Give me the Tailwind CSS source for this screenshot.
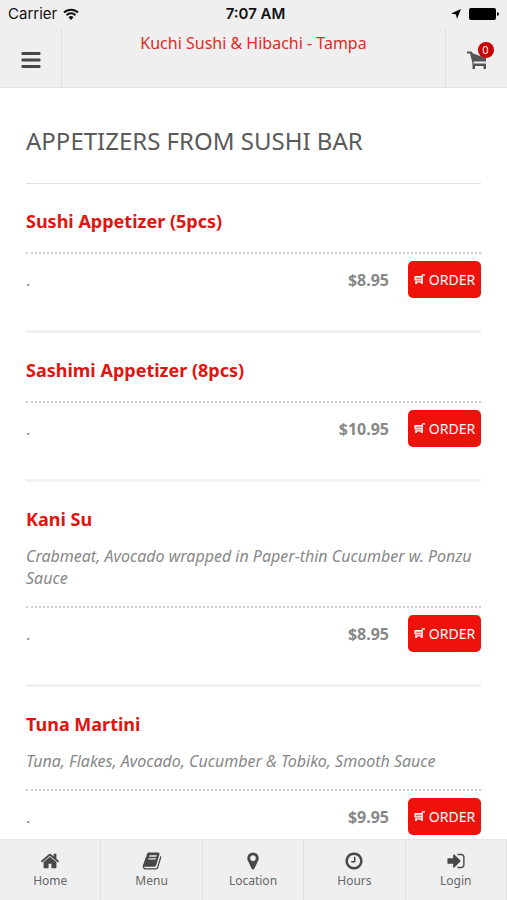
<!DOCTYPE html>
<html lang="en">
  <head>
    <title>Kuchi Sushi &amp; Hibachi - Tampa</title>
    <meta charset="utf-8">
    <meta name="viewport" content="width=device-width, initial-scale=1.0">
    <script src="https://cdn.jsdelivr.net/npm/@tailwindcss/browser@4"></script>
  </head>
  <body class="bg-white font-['Noto_Sans',sans-serif] text-[#888] overflow-hidden">
    <!-- shared icons -->
    <svg class="hidden">
      <symbol id="icon-order" viewBox="0 0 12 12">
        <path d="M.5 3h8L9.500 1H12M1.200 3v3.500h7.800M9 2v6.500H1.500" fill="none" stroke="currentColor" stroke-width="1.400"/>
        <path d="M1.500 3h7.500v3.500h-7.500z" fill="currentColor" opacity=".4"/>
        <path d="M1.200 8.500h2v2.500h-2zM7.500 8.500h2v2.500h-2z" fill="currentColor"/>
      </symbol>
    </svg>

    <header class="fixed inset-x-0 top-0 z-10 bg-[#efefef] border-b border-[#e0e0e0]">
      <div class="grid grid-cols-3 items-center h-7 px-2 text-[#111] text-[15px] font-['Inter',sans-serif]">
        <div class="flex items-center gap-1.5">
          <span>Carrier</span>
          <svg class="w-4 h-3" viewBox="0 0 16 12" fill="none" stroke="#111" stroke-width="2">
            <path d="M1 4.500a10 10 0 0 1 14 0M3.500 7.200a6.400 6.400 0 0 1 9 0"/>
            <path d="M8 12L5.500 9.300a3.500 3.500 0 0 1 5 0z" fill="#111" stroke="none"/>
          </svg>
        </div>
        <span class="pl-1 text-center font-semibold">7:07 AM</span>
        <div class="flex items-center justify-end gap-2">
          <svg class="w-[10px] h-[10px]" viewBox="0 0 10 10"><path d="M10 0L6 10L5 5.500L0 4.500z"/></svg>
          <svg class="w-[30px] h-3" viewBox="0 0 30 12"><rect width="27" height="12" rx="2"/><path d="M28 4q2 .5 2 2t-2 2z"/></svg>
        </div>
      </div>
      <div class="flex h-[59px]">
        <button aria-label="Open menu" class="flex items-center justify-center w-[62px] pt-1 border-r border-[#e0e0e0]">
          <svg class="w-5 h-4" viewBox="0 0 20 16" fill="#484848">
            <rect x=".5" width="19" height="3" rx="1"/><rect x=".5" y="6.500" width="19" height="3" rx="1"/><rect x=".5" y="13" width="19" height="3" rx="1"/>
          </svg>
        </button>
        <h1 class="flex-1 pt-[3px] text-center text-base text-[#e12a26]">Kuchi Sushi &amp; Hibachi - Tampa</h1>
        <button aria-label="Cart" class="flex items-center justify-center w-[62px] pt-1 border-l border-[#e0e0e0]">
          <span class="relative">
            <svg class="w-5 h-5" viewBox="0 0 20 20" fill="#555">
              <path d="M0 1.500h4.500l1.500 2L19 8v3.500H6.500l.3 2H19V19h-2.500v-3H8v3H5.500v-6L3 3.500H0z"/>
            </svg>
            <span class="absolute -top-2 -right-[7px] size-4 rounded-full bg-[#c80000] text-white text-[11px] leading-4">0</span>
          </span>
        </button>
      </div>
    </header>

    <main class="px-[26px] pt-[123px] pb-16">
      <h2 class="pb-6 border-b border-[#e0e0e0] text-2xl leading-9 text-[#5a5a5a]">APPETIZERS FROM SUSHI BAR</h2>

      <article class="pt-[23px] pb-8 border-b-3 border-[#f2f2f2]">
        <h3 class="text-lg leading-7 font-bold text-[#e01410]">Sushi Appetizer (5pcs)</h3>
        <div class="flex items-center mt-[17px] pt-[7px] border-t-2 border-dotted border-[#ccc]">
          <p class="flex-1 text-base">.</p>
          <span class="mr-[19px] text-base font-bold">$8.95</span>
          <button class="flex items-center justify-center gap-1 w-[73px] h-[37px] rounded-[5px] bg-[#ef120b] text-sm text-white">
            <svg class="size-[11px]"><use href="#icon-order"/></svg>ORDER
          </button>
        </div>
      </article>

      <article class="pt-[23px] pb-8 border-b-3 border-[#f2f2f2]">
        <h3 class="text-lg leading-7 font-bold text-[#e01410]">Sashimi Appetizer (8pcs)</h3>
        <div class="flex items-center mt-[17px] pt-[7px] border-t-2 border-dotted border-[#ccc]">
          <p class="flex-1 text-base">.</p>
          <span class="mr-[19px] text-base font-bold">$10.95</span>
          <button class="flex items-center justify-center gap-1 w-[73px] h-[37px] rounded-[5px] bg-[#ef120b] text-sm text-white">
            <svg class="size-[11px]"><use href="#icon-order"/></svg>ORDER
          </button>
        </div>
      </article>

      <article class="pt-[23px] pb-8 border-b-3 border-[#f2f2f2]">
        <h3 class="text-lg leading-7 font-bold text-[#e01410]">Kani Su</h3>
        <p class="mt-3 text-base leading-[22px] italic">Crabmeat, Avocado wrapped in Paper-thin Cucumber w. Ponzu Sauce</p>
        <div class="flex items-center mt-[17px] pt-[7px] border-t-2 border-dotted border-[#ccc]">
          <p class="flex-1 text-base">.</p>
          <span class="mr-[19px] text-base font-bold">$8.95</span>
          <button class="flex items-center justify-center gap-1 w-[73px] h-[37px] rounded-[5px] bg-[#ef120b] text-sm text-white">
            <svg class="size-[11px]"><use href="#icon-order"/></svg>ORDER
          </button>
        </div>
      </article>

      <article class="pt-[23px] pb-8 border-b-3 border-[#f2f2f2]">
        <h3 class="text-lg leading-7 font-bold text-[#e01410]">Tuna Martini</h3>
        <p class="mt-3 text-base leading-[22px] italic">Tuna, Flakes, Avocado, Cucumber &amp; Tobiko, Smooth Sauce</p>
        <div class="flex items-center mt-[17px] pt-[7px] border-t-2 border-dotted border-[#ccc]">
          <p class="flex-1 text-base">.</p>
          <span class="mr-[19px] text-base font-bold">$9.95</span>
          <button class="flex items-center justify-center gap-1 w-[73px] h-[37px] rounded-[5px] bg-[#ef120b] text-sm text-white">
            <svg class="size-[11px]"><use href="#icon-order"/></svg>ORDER
          </button>
        </div>
      </article>
    </main>

    <nav class="fixed inset-x-0 bottom-0 z-10 grid grid-cols-5 h-[61px] bg-[#efefef] border-t border-[#e6e6e6] text-xs leading-5 text-[#666]">
      <a href="#home" class="flex flex-col items-center pt-[11px] border-r border-[#e2e2e2]">
        <svg class="size-5" viewBox="0 0 1792 1792" fill="#484848"><path d="M1472 992v480q0 26-19 45t-45 19h-384v-384h-256v384h-384q-26 0-45-19t-19-45v-480q0-1 .5-3t.5-3l575-474 575 474q1 2 1 6zm223-69l-62 74q-8 9-21 11h-3q-13 0-21-7l-692-577-692 577q-12 8-24 7-13-2-21-11l-62-74q-8-10-7-23.500t11-21.500l719-599q32-26 76-26t76 26l244 204v-195q0-14 9-23t23-9h192q14 0 23 9t9 23v408l219 182q10 8 11 21.500t-7 23.500z"/></svg>
        Home
      </a>
      <a href="#menu" class="flex flex-col items-center pt-[11px] border-r border-[#e2e2e2]">
        <svg class="size-5" viewBox="0 0 1792 1792" fill="#484848"><path d="M1703 478q40 57 18 129l-275 906q-19 64-76.500 107.500t-122.500 43.500h-923q-77 0-148.500-53.500t-99.500-131.500q-24-67-2-127 0-4 3-27t4-37q1-8-3-21.500t-3-19.500q2-11 8-21t16.500-23.500 16.500-23.500q23-38 45-91.500t30-91.500q3-10 .5-30t-.5-28q3-11 17-28t17-23q21-36 42-92t25-90q1-9-2.500-32t.5-28q4-13 22-30.500t22-22.500q19-26 42.500-84.500t27.500-96.500q1-8-3-25.500t-2-26.500q2-8 9-18t18-23 17-21q8-12 16.500-30.500t15-35 16-36 19.500-32 26.500-23.500 36-11.500 47.500 5.500l-1 3q38-9 51-9h761q74 0 114 56t18 130l-274 906q-36 119-71.500 153.500t-128.500 34.500h-869q-27 0-38 15-11 16-1 43 24 70 144 70h923q29 0 56-15.500t35-41.500l300-987q7-22 5-57 38 15 59 43zm-1064 2q-4 13 2 22.500t20 9.500h608q13 0 25.500-9.500t16.500-22.500l21-64q4-13-2-22.500t-20-9.500h-608q-13 0-25.500 9.500t-16.500 22.500zm-83 256q-4 13 2 22.500t20 9.500h608q13 0 25.500-9.500t16.500-22.500l21-64q4-13-2-22.500t-20-9.500h-608q-13 0-25.500 9.500t-16.500 22.500z"/></svg>
        Menu
      </a>
      <a href="#location" class="flex flex-col items-center pt-[11px] border-r border-[#e2e2e2]">
        <svg class="size-5" viewBox="0 0 1792 1792" fill="#484848"><path d="M1152 640q0-106-75-181t-181-75-181 75-75 181 75 181 181 75 181-75 75-181zm256 0q0 109-33 179l-364 774q-16 33-47.500 52t-67.500 19-67.500-19-46.500-52l-365-774q-33-70-33-179 0-212 150-362t362-150 362 150 150 362z"/></svg>
        Location
      </a>
      <a href="#hours" class="flex flex-col items-center pt-[11px] border-r border-[#e2e2e2]">
        <svg class="size-5" viewBox="0 0 1792 1792" fill="#484848"><path d="M1024 544v448q0 14-9 23t-23 9h-320q-14 0-23-9t-9-23v-64q0-14 9-23t23-9h224v-352q0-14 9-23t23-9h64q14 0 23 9t9 23zm416 352q0-148-73-273t-198-198-273-73-273 73-198 198-73 273 73 273 198 198 273 73 273-73 198-198 73-273zm224 0q0 209-103 385.500t-279.500 279.500-385.500 103-385.500-103-279.500-279.500-103-385.500 103-385.500 279.500-279.500 385.500-103 385.500 103 279.500 279.500 103 385.500z"/></svg>
        Hours
      </a>
      <a href="#login" class="flex flex-col items-center pt-[11px] border-r border-[#e2e2e2]">
        <svg class="size-5" viewBox="0 0 1792 1792" fill="#484848"><path d="M1312 896q0 26-19 45l-544 544q-19 19-45 19t-45-19-19-45v-288h-448q-26 0-45-19t-19-45v-384q0-26 19-45t45-19h448v-288q0-26 19-45t45-19 45 19l544 544q19 19 19 45zm352-352v704q0 119-84.500 203.500t-203.500 84.500h-320q-13 0-22.500-9.500t-9.500-22.500q0-4-1-20t-.5-26.500 3-23.500 10-19.500 20.500-6.500h320q66 0 113-47t47-113v-704q0-66-47-113t-113-47h-312l-11.500-1-11.500-3-8-5.500-7-9-2-13.500q0-4-1-20t-.5-26.500 3-23.500 10-19.500 20.500-6.500h320q119 0 203.500 84.500t84.500 203.500z"/></svg>
        Login
      </a>
    </nav>
  </body>
</html>
